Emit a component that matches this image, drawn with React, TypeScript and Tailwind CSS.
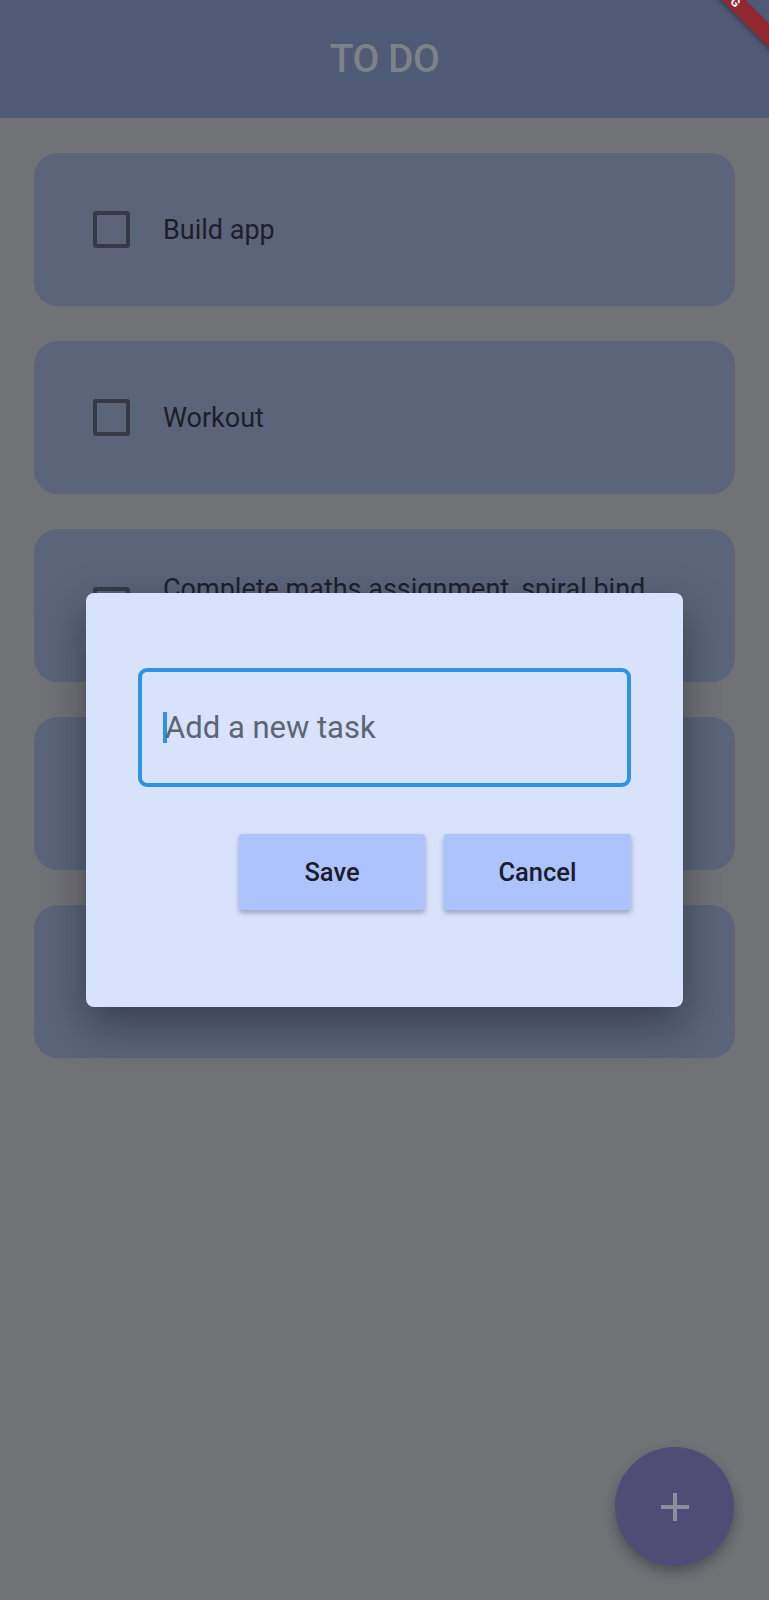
import React from "react";

const tasks = [
  { text: "Build app" },
  { text: "Workout" },
  { text: "Complete maths assignment, spiral bind", text2: "and submit" },
  { text: "Read a book" },
  { text: "Buy groceries" },
];

function Checkbox() {
  return <div className="w-[37px] h-[37px] shrink-0 border-[4px] border-[#353a46] rounded-[3px]" />;
}

export default function App() {
  return (
    <div
      className="relative w-[769px] h-[1600px] overflow-hidden bg-[#717276]"
      style={{ fontFamily: "Roboto, 'Liberation Sans', sans-serif" }}
    >
      <header className="h-[118px] bg-[#4f5a76] flex items-center justify-center">
        <span className="text-[39px] font-medium text-[#7d8189] tracking-[-0.5px] leading-none">TO DO</span>
      </header>

      <div className="flex flex-col gap-[35px] px-[34px] pt-[35px]">
        {tasks.map((t, i) => (
          <div key={i} className="h-[153px] rounded-[24px] bg-[#5b6478] flex items-center pl-[59px] pr-[40px] gap-[33px]">
            <Checkbox />
            <div className="text-[27px] text-[#1b1f2b] leading-[34px]">
              <div>{t.text}</div>
              {t.text2 && <div>{t.text2}</div>}
            </div>
          </div>
        ))}
      </div>

      {/* Dialog */}
      <div className="absolute left-[86px] top-[593px] w-[597px] h-[414px] bg-[#d8e2fa] rounded-[8px] shadow-[0_18px_40px_rgba(30,35,50,0.55)] pt-[75px] px-[52px]">
        <div className="h-[119px] border-[4px] border-[#2f93e2] rounded-[9px] flex items-center pl-[21px]">
          <div className="w-[4px] h-[31px] bg-[#2f93e2] mr-[-2px]" />
          <span className="text-[31px] text-[#5d6575] leading-none">Add a new task</span>
        </div>
        <div className="flex justify-end gap-[19px] mt-[47px]">
          <button className="w-[186px] h-[76px] bg-[#adc3fd] rounded-[3px] shadow-[0_3px_5px_rgba(40,50,80,0.35)] text-[25.5px] font-medium text-[#1a1d2b]">
            Save
          </button>
          <button className="w-[187px] h-[76px] bg-[#adc3fd] rounded-[3px] shadow-[0_3px_5px_rgba(40,50,80,0.35)] text-[25.5px] font-medium text-[#1a1d2b]">
            Cancel
          </button>
        </div>
      </div>

      {/* FAB */}
      <div className="absolute right-[35px] bottom-[34px] w-[119px] h-[119px] rounded-full bg-[#514c75] shadow-[0_6px_12px_rgba(40,40,50,0.45)] flex items-center justify-center">
        <svg width="32" height="32" viewBox="0 0 32 32">
          <path d="M16 2 V30 M2 16 H30" stroke="#8d8d9b" strokeWidth="4" />
        </svg>
      </div>

      {/* Debug banner */}
      <div className="absolute top-[-14px] right-[-39px] w-[160px] h-[17px] bg-[#92272f] rotate-45 origin-center flex items-center justify-center shadow-[0_2px_4px_rgba(0,0,0,0.3)]">
        <span className="text-[12px] font-bold text-white tracking-[1px] leading-none translate-x-[-6px]">DEBUG</span>
      </div>
    </div>
  );
}
